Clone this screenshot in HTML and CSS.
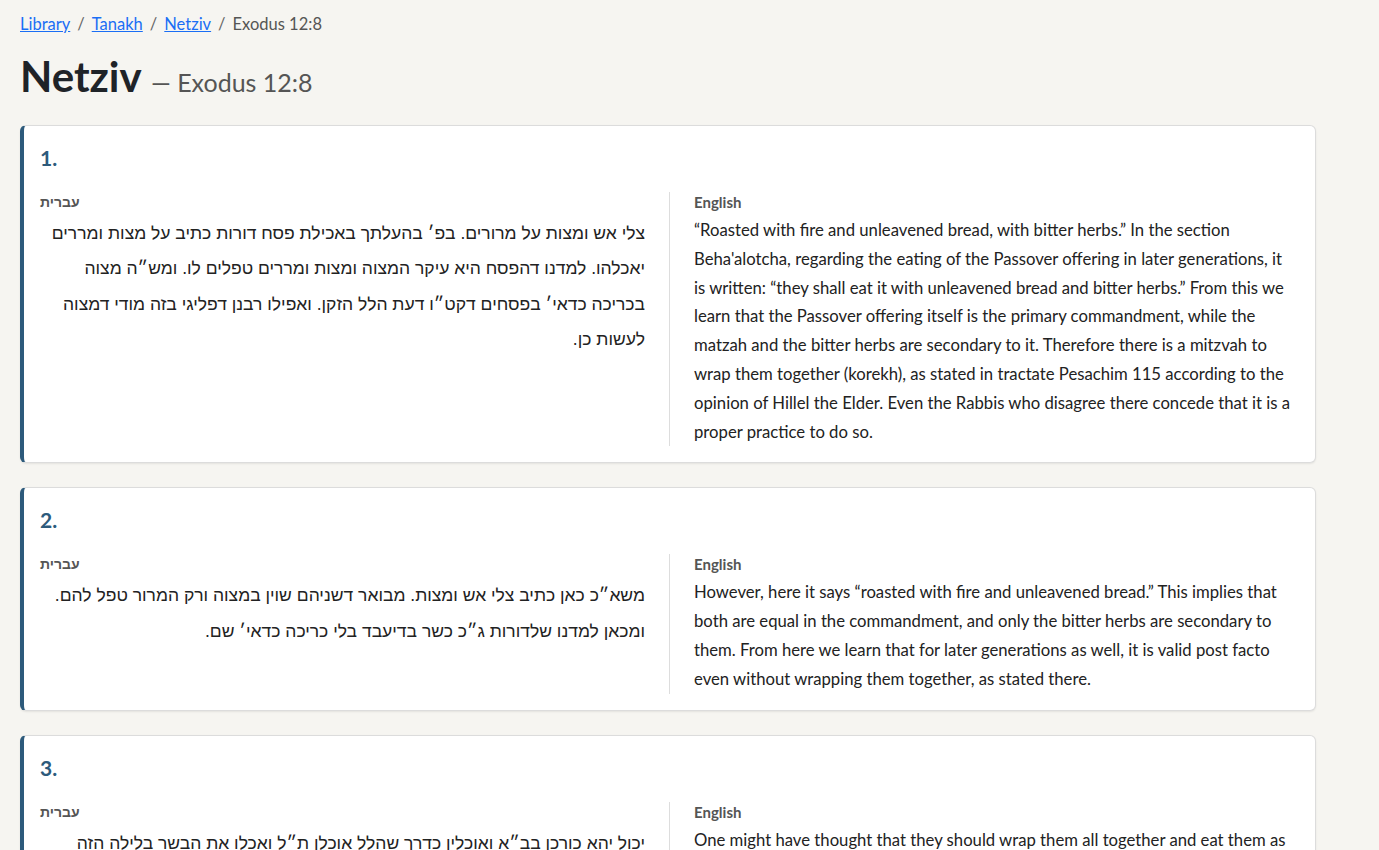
FILE: index.html
```html
<!DOCTYPE html>
<html lang="en">
<head>
<meta charset="utf-8">
<title>Netziv — Exodus 12:8</title>
<link rel="stylesheet" href="styles.css">
</head>
<body>
<main class="page">
  <nav class="crumbs">
    <a href="#">Library</a><span class="sep">/</span><a href="#">Tanakh</a><span class="sep">/</span><a href="#">Netziv</a><span class="sep">/</span><span class="current">Exodus 12:8</span>
  </nav>
  <h1 class="title">Netziv <span class="sub">— Exodus 12:8</span></h1>

  <section class="card">
    <h2 class="num">1.</h2>
    <div class="cols">
      <div class="col he">
        <div class="label">עברית</div>
        <p class="text" dir="rtl">צלי אש ומצות על מרורים. בפ׳ בהעלתך באכילת פסח דורות כתיב על מצות ומררים יאכלהו. למדנו דהפסח היא עיקר המצוה ומצות ומררים טפלים לו. ומש״ה מצוה בכריכה כדאי׳ בפסחים דקט״ו דעת הלל הזקן. ואפילו רבנן דפליגי בזה מודי דמצוה לעשות כן.</p>
      </div>
      <div class="col en">
        <div class="label">English</div>
        <p class="text">“Roasted with fire and unleavened bread, with bitter herbs.” In the section Beha'alotcha, regarding the eating of the Passover offering in later generations, it is written: “they shall eat it with unleavened bread and bitter herbs.” From this we learn that the Passover offering itself is the primary commandment, while the matzah and the bitter herbs are secondary to it. Therefore there is a mitzvah to wrap them together (korekh), as stated in tractate Pesachim 115 according to the opinion of Hillel the Elder. Even the Rabbis who disagree there concede that it is a proper practice to do so.</p>
      </div>
    </div>
  </section>

  <section class="card">
    <h2 class="num">2.</h2>
    <div class="cols">
      <div class="col he">
        <div class="label">עברית</div>
        <p class="text" dir="rtl">משא״כ כאן כתיב צלי אש ומצות. מבואר דשניהם שוין במצוה ורק המרור טפל להם. ומכאן למדנו שלדורות ג״כ כשר בדיעבד בלי כריכה כדאי׳ שם.</p>
      </div>
      <div class="col en">
        <div class="label">English</div>
        <p class="text">However, here it says “roasted with fire and unleavened bread.” This implies that both are equal in the commandment, and only the bitter herbs are secondary to them. From here we learn that for later generations as well, it is valid post facto even without wrapping them together, as stated there.</p>
      </div>
    </div>
  </section>

  <section class="card">
    <h2 class="num">3.</h2>
    <div class="cols">
      <div class="col he">
        <div class="label">עברית</div>
        <p class="text" dir="rtl">יכול יהא כורכן בב״א ואוכלין כדרך שהלל אוכלן ת״ל ואכלו את הבשר בלילה הזה צלי&nbsp;אש ומצות על מרורים יאכלוהו. מלמד שמצוה לאכול כל אחד בפני עצמו.</p>
      </div>
      <div class="col en">
        <div class="label">English</div>
        <p class="text">One might have thought that they should wrap them all together and eat them as Hillel did; therefore the verse says, “they shall eat the flesh on that night, roasted with fire, and unleavened bread with bitter herbs.” This teaches that it is a mitzvah to eat each one by itself.</p>
      </div>
    </div>
  </section>
</main>
</body>
</html>
```

FILE: styles.css
```css
html, body {
  margin: 0;
  padding: 0;
}
body {
  background: #f6f5f1;
  color: #222;
  font-family: Lato, "Noto Sans", "DejaVu Sans", sans-serif;
}
.page {
  width: 1296px;
  padding: 14px 20px 40px;
}
.crumbs {
  font-size: 16.5px;
  line-height: 20px;
  color: #555;
}
.crumbs a {
  color: #1a6ef5;
  text-decoration: underline;
}
.crumbs .sep {
  color: #666;
  padding: 0 7px;
}
.crumbs .current {
  color: #555;
}
.title {
  margin: 18px 0 19px;
  font-size: 42px;
  line-height: 48px;
  font-weight: 700;
  color: #1f2328;
}
.title .sub {
  font-size: 25px;
  font-weight: 400;
  color: #555;
}
.card {
  background: #fff;
  border: 1px solid #dcdcdc;
  border-left: 4px solid #2d5a7b;
  border-radius: 6px;
  box-shadow: 0 1px 2px rgba(0,0,0,0.08);
  padding: 20px 23px 16px 16px;
  margin-bottom: 24px;
}
.num {
  margin: 0 0 22px;
  font-size: 21px;
  line-height: 24px;
  font-weight: 700;
  color: #2d5a7b;
}
.cols {
  display: grid;
  grid-template-columns: 605px 1fr;
  column-gap: 24px;
}
.col.en {
  border-left: 1px solid #ddd;
  padding-left: 24px;
}
.label {
  font-size: 15px;
  line-height: 20px;
  font-weight: 700;
  color: #555;
  margin-bottom: 4px;
}
.he .label {
  font-family: "Liberation Sans", "DejaVu Sans", sans-serif;
  font-size: 14px;
}
.text {
  margin: 0;
  font-size: 16.7px;
  line-height: 28.8px;
  color: #222;
}
.he .text {
  font-family: "Liberation Sans", "DejaVu Sans", sans-serif;
  font-size: 17.5px;
  line-height: 35.3px;
}
```
